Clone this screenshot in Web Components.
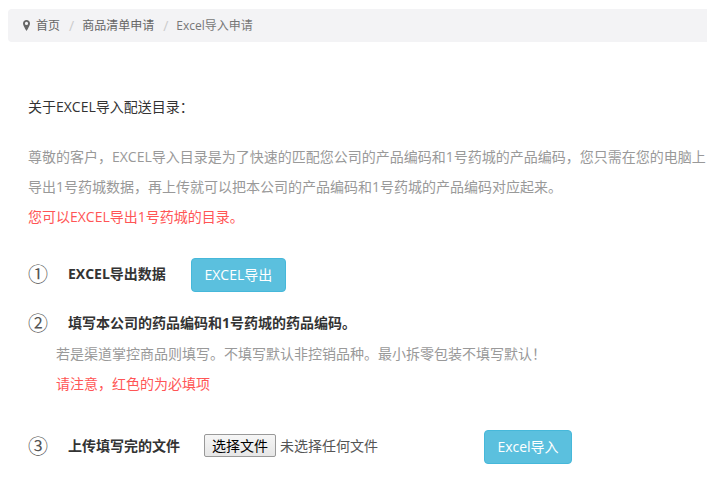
<!DOCTYPE html>
<html lang="zh">
<head>
<meta charset="utf-8">
<title>Excel导入申请</title>
<style>
  html, body { margin: 0; background: #fff; }
  body { font: 14px "Open Sans", "Noto Sans CJK SC", sans-serif; color: #333; overflow: hidden; }
</style>
</head>
<body>
<import-page>
  <bread-crumb>
    <crumb-item home>首页</crumb-item>
    <crumb-item sep>商品清单申请</crumb-item>
    <crumb-item sep>Excel导入申请</crumb-item>
  </bread-crumb>

  <intro-block>
    <span slot="title">关于EXCEL导入配送目录：</span>
    <span>尊敬的客户，EXCEL导入目录是为了快速的匹配您公司的产品编码和1号药城的产品编码，您只需在您的电脑上</span>
    <span>导出1号药城数据，再上传就可以把本公司的产品编码和1号药城的产品编码对应起来。</span>
    <span slot="note">您可以EXCEL导出1号药城的目录。</span>
  </intro-block>

  <import-step num="①" style="margin-top:26px">
    <span slot="label">EXCEL导出数据</span>
    <info-button style="margin-left:25px;width:95px">EXCEL导出</info-button>
  </import-step>

  <import-step num="②" style="margin-top:17px">
    <span slot="label">填写本公司的药品编码和1号药城的药品编码。</span>
    <span slot="detail" style="color:#999">若是渠道掌控商品则填写。不填写默认非控销品种。最小拆零包装不填写默认！</span>
    <span slot="detail" style="color:#f55">请注意，红色的为必填项</span>
  </import-step>

  <import-step num="③" style="margin-top:31px">
    <span slot="label">上传填写完的文件</span>
    <file-picker style="margin-left:24px;margin-bottom:4px"></file-picker>
    <info-button style="margin-left:106px;width:88px">Excel导入</info-button>
  </import-step>
</import-page>

<script>
function shadow(el, html) {
  el.attachShadow({ mode: 'open' }).innerHTML = html;
}

class ImportPage extends HTMLElement {
  constructor() {
    super();
    shadow(this, `
      <style>
        :host { display: block; width: 699px; margin-left: 8px; padding: 9px 0 20px; overflow: hidden; }
      </style>
      <slot></slot>
    `);
  }
}

class BreadCrumb extends HTMLElement {
  constructor() {
    super();
    shadow(this, `
      <style>
        :host { display: flex; align-items: center; height: 33px; padding-left: 15px; box-sizing: border-box;
                background: #f3f3f5; border-radius: 4px 0 0 4px; font-size: 12px; line-height: 17px; }
      </style>
      <slot></slot>
    `);
  }
}

class CrumbItem extends HTMLElement {
  constructor() {
    super();
    const home = this.hasAttribute('home');
    const sep = this.hasAttribute('sep');
    shadow(this, `
      <style>
        :host { display: inline-flex; align-items: center; color: #666; }
        :host(:last-child) { color: #777; }
        svg { display: block; margin-right: 6px; }
        .sep { color: #ccc; font-size: 14px; padding: 0 8px 0 9px; }
      </style>
      ${home ? '<svg width="7" height="11" viewBox="0 0 7 11"><path fill="#666" fill-rule="evenodd" d="M3.5 0C1.5 0 0 1.5 0 3.4 0 5.3 2.5 9.2 3.5 11c1-1.8 3.5-5.7 3.5-7.6C7 1.5 5.5 0 3.5 0zm0 5a1.6 1.6 0 1 1 0-3.2 1.6 1.6 0 0 1 0 3.2z"/></svg>' : ''}
      ${sep ? '<span class="sep">/</span>' : ''}
      <slot></slot>
    `);
  }
}

class IntroBlock extends HTMLElement {
  constructor() {
    super();
    shadow(this, `
      <style>
        :host { display: block; padding: 50px 0 0 20px; line-height: 30px; white-space: nowrap; }
        .title { margin-bottom: 20px; color: #333; }
        .body { display: flex; flex-direction: column; color: #999; }
        .note { color: #f55; }
      </style>
      <div class="title"><slot name="title"></slot></div>
      <div class="body"><slot></slot></div>
      <div class="note"><slot name="note"></slot></div>
    `);
  }
}

class ImportStep extends HTMLElement {
  constructor() {
    super();
    shadow(this, `
      <style>
        :host { display: block; padding-left: 20px; white-space: nowrap; }
        .row { display: flex; align-items: center; min-height: 34px; }
        .num { width: 40px; font-size: 20px; line-height: 34px; color: #555; flex: none; }
        .label { font-weight: 700; color: #333; flex: none; padding-bottom: 4px; }
        .details { display: flex; flex-direction: column; margin-top: -2px; padding-left: 28px; line-height: 30px; }
        ::slotted([slot="detail"]) { display: block; }
      </style>
      <div class="row">
        <span class="num">${this.getAttribute('num')}</span>
        <span class="label"><slot name="label"></slot></span>
        <slot></slot>
      </div>
      <div class="details"><slot name="detail"></slot></div>
    `);
  }
}

class InfoButton extends HTMLElement {
  constructor() {
    super();
    shadow(this, `
      <style>
        :host { display: inline-flex; align-items: center; justify-content: center; height: 34px; padding: 0 0 3px;
                box-sizing: border-box; background: #5bc0de; border: 1px solid #46b8da; border-radius: 4px;
                color: #fff; font-size: 14px; }
      </style>
      <slot></slot>
    `);
  }
}

class FilePicker extends HTMLElement {
  constructor() {
    super();
    shadow(this, `
      <style>
        :host { display: inline-flex; align-items: center; gap: 4px; color: #555; font-size: 14px; }
        button { width: 72px; height: 23px; padding: 0 0 2px; font: 14px "Liberation Sans", "Noto Sans CJK SC", sans-serif;
                 color: #000; background: linear-gradient(#f6f6f6, #e6e6e6); border: 1px solid #999; border-radius: 2px; }
      </style>
      <button type="button">选择文件</button>
      <span>未选择任何文件</span>
    `);
  }
}

customElements.define('import-page', ImportPage);
customElements.define('bread-crumb', BreadCrumb);
customElements.define('crumb-item', CrumbItem);
customElements.define('intro-block', IntroBlock);
customElements.define('import-step', ImportStep);
customElements.define('info-button', InfoButton);
customElements.define('file-picker', FilePicker);
</script>
</body>
</html>
